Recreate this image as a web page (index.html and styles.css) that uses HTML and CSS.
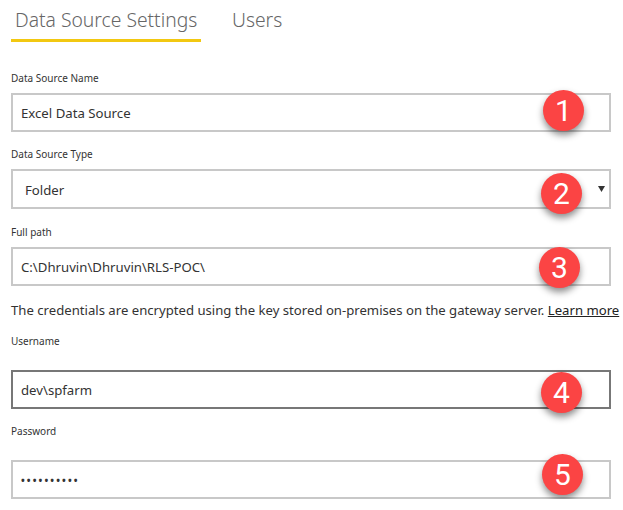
FILE: index.html
```html
<!DOCTYPE html>
<html lang="en">

<head>
    <meta charset="UTF-8">
    <title>Data Source Settings</title>
    <link rel="stylesheet" href="styles.css">
</head>

<body>

    <!-- Tabs -->
    <nav class="tabs">
        <a class="tab active">Data Source Settings</a>
        <a class="tab">Users</a>
    </nav>

    <form class="settings">
        <label class="field-label label-name">Data Source Name</label>
        <div class="field">
            <span class="field-value">Excel Data Source</span>
            <span class="badge badge-1">1</span>
        </div>

        <label class="field-label label-type">Data Source Type</label>
        <div class="field field-select">
            <span class="field-value select-value">Folder</span>
            <svg class="caret" width="7" height="6" viewBox="0 0 7 6"><path d="M0 0H7L3.5 6Z" fill="#333"/></svg>
            <span class="badge badge-2">2</span>
        </div>

        <label class="field-label label-path">Full path</label>
        <div class="field">
            <span class="field-value">C:\Dhruvin\Dhruvin\RLS-POC\</span>
            <span class="badge badge-3">3</span>
        </div>

        <p class="note">The credentials are encrypted using the key stored on-premises on the gateway server. <a class="learn">Learn more</a></p>

        <label class="field-label label-user">Username</label>
        <div class="field field-focus">
            <span class="field-value">dev\spfarm</span>
            <span class="badge badge-4">4</span>
        </div>

        <label class="field-label label-pass">Password</label>
        <div class="field">
            <span class="field-value dots">••••••••••</span>
            <span class="badge badge-5">5</span>
        </div>
    </form>

</body>

</html>
```

FILE: styles.css
```css
/* General Reset */
* {
    margin: 0;
    padding: 0;
    box-sizing: border-box;
}

body {
    background-color: #fff;
    color: #333;
    font-family: "Noto Sans", "Liberation Sans", sans-serif;
    padding: 0 12px 0 11px;
}

/* Tabs */
.tabs {
    display: flex;
    gap: 27px;
    height: 42px;
}

.tab {
    height: 42px;
    padding: 5px 5px 0 4px;
    font-size: 19.3px;
    font-weight: 300;
    line-height: 30px;
    color: #666;
}

.tab.active {
    width: 190px;
    white-space: nowrap;
    border-bottom: 3px solid #f2c811;
}

/* Form */
.field-label {
    display: block;
    font-size: 10px;
    line-height: 14px;
    color: #333;
}

.label-name {
    margin-top: 29px;
    margin-bottom: 8px;
}

.label-type {
    margin-top: 15px;
    margin-bottom: 8px;
}

.label-path {
    margin-top: 16px;
    margin-bottom: 8px;
}

.label-user {
    margin-top: 15px;
    margin-bottom: 22px;
}

.label-pass {
    margin-top: 15px;
    margin-bottom: 22px;
}

.field {
    position: relative;
    display: flex;
    align-items: center;
    height: 39px;
    width: 600px;
    padding: 1px 0 0 8px;
    border: 2px solid #c8c8c8;
}

.field-select {
    height: 40px;
}

.field-focus {
    border-color: #777;
}

.field-value {
    font-size: 13.2px;
    color: #333;
}

.select-value {
    padding-left: 4px;
}

.dots {
    font-size: 10px;
    letter-spacing: 2.1px;
    font-weight: 700;
}

.caret {
    position: absolute;
    right: 4px;
    top: 15px;
}

.note {
    margin-top: 15px;
    font-size: 13.15px;
    line-height: 18px;
    white-space: nowrap;
    color: #333;
}

.learn {
    color: #222;
    text-decoration: underline;
}

/* Numbered callouts */
.badge {
    position: absolute;
    display: flex;
    align-items: center;
    justify-content: center;
    width: 41px;
    height: 41px;
    border-radius: 50%;
    background-color: #fb4444;
    color: #fff;
    font-family: Roboto, "Liberation Sans", sans-serif;
    font-size: 30px;
    box-shadow: 0 4px 7px rgba(0, 0, 0, 0.45);
}

.badge-1 { top: -5px; left: 530px; }
.badge-2 { top: 2px; left: 528px; }
.badge-3 { top: -2px; left: 526px; }
.badge-4 { top: 0; left: 528px; }
.badge-5 { top: -8px; left: 529px; }
```
